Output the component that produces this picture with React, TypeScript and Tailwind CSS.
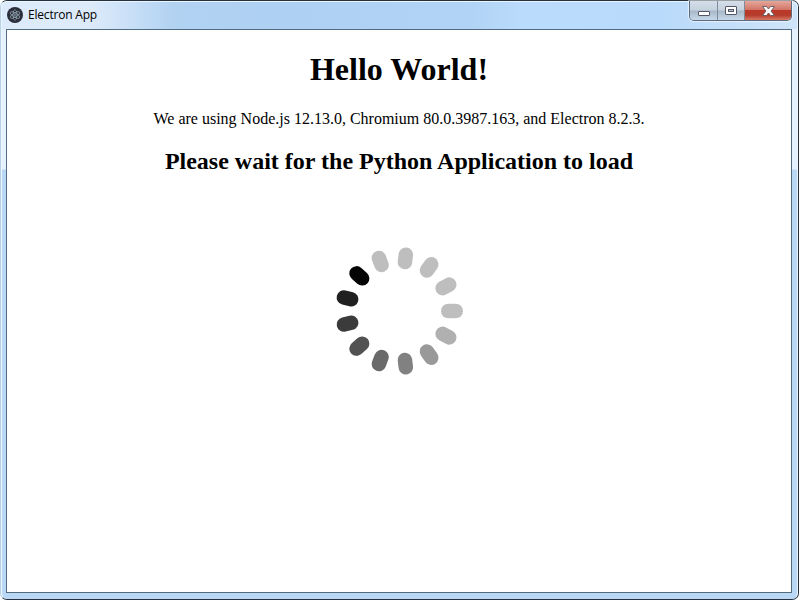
const shades = ["#bebebe", "#b0b0b0", "#999999", "#818181", "#6a6a6a", "#525252", "#3b3b3b", "#202020", "#040404", "#bebebe", "#bebebe", "#bebebe", "#bebebe"];

function ElectronIcon() {
  return (
    <svg className="h-4 w-4" viewBox="0 0 16 16">
      <circle cx="8" cy="8" r="8" fill="#2b2e3a" />
      <g fill="none" stroke="#93a7b3" strokeWidth="0.7">
        <ellipse cx="8" cy="8" rx="5.4" ry="2" transform="rotate(30 8 8)" />
        <ellipse cx="8" cy="8" rx="5.4" ry="2" transform="rotate(90 8 8)" />
        <ellipse cx="8" cy="8" rx="5.4" ry="2" transform="rotate(150 8 8)" />
      </g>
      <circle cx="8" cy="8" r="0.8" fill="#a9bdc8" />
    </svg>
  );
}

function TitleBar() {
  return (
    <header className="flex h-[27px] shrink-0 items-start justify-between pl-[5px] pr-[5px]">
      <div className="flex h-[26px] items-center gap-[5px]">
        <ElectronIcon />
        <span className="font-['Open_Sans','Noto_Sans',sans-serif] text-[12px] leading-4 tracking-[-0.2px] text-black">Electron App</span>
      </div>
      <div className="-mt-px flex h-5 w-[103px] overflow-hidden rounded-b-[5px] border border-t-0 border-[#5c6b7c] shadow-[0_0_1px_1px_rgba(255,255,255,0.6)]">
        <button aria-label="Minimize" className="flex w-7 items-center justify-center border-r border-[#7d8b9b] bg-[linear-gradient(#d5dfea_0%,#c6d1de_48%,#a8b7c8_52%,#c6d8e9_100%)]">
          <svg className="h-[18px] w-[27px]" viewBox="0 0 27 18"><rect x="8.5" y="9.5" width="11" height="4" rx="0.5" fill="#fff" stroke="#535666" /></svg>
        </button>
        <button aria-label="Maximize" className="flex w-[27px] items-center justify-center border-r border-[#7d8b9b] bg-[linear-gradient(#d5dfea_0%,#c6d1de_48%,#a8b7c8_52%,#c6d8e9_100%)]">
          <svg className="h-[18px] w-[26px]" viewBox="0 0 26 18"><rect x="7.5" y="4.5" width="11" height="8" rx="0.5" fill="#fff" stroke="#535666" /><rect x="10.5" y="7.5" width="5" height="2" fill="#b8c4d2" stroke="#535666" /></svg>
        </button>
        <button aria-label="Close" className="flex flex-1 items-center justify-center bg-[linear-gradient(#e5a79b_0%,#d17668_45%,#bb3828_50%,#b53c2b_75%,#d87865_100%)]">
          <svg className="h-[18px] w-[46px]" viewBox="0 0 46 18"><path d="M17.5 4.5h4L23.5 7l2-2.5h4L26 9l3.5 4.5h-4L23.5 11l-2 2.5h-4L21 9Z" fill="#fff" stroke="#62545b" strokeWidth="0.9" /></svg>
        </button>
      </div>
    </header>
  );
}

function Spinner() {
  return (
    <svg className="h-[140px] w-[140px]" viewBox="-70 -70 140 140" role="img" aria-label="Loading">
      {shades.map((shade, i) => (
        <rect key={i} x="42" y="-7.25" width="22" height="14.5" rx="7.25" fill={shade} transform={`rotate(${(i * 360) / 13})`} />
      ))}
    </svg>
  );
}

export default function App() {
  return (
    <div className="h-[601px] w-[800px] overflow-hidden bg-white">
      <div className="flex h-[600px] w-[799px] flex-col rounded-[7px] border border-[#27313d] border-l-[#b9cfe2] bg-[linear-gradient(#e5f2fd_0px,#e5f2fd_168px,#b9d8f5_169px,#b9d8f5_600px)]">
        <div className="flex flex-1 flex-col rounded-[6px] border border-[#eaf6ff] border-b-[#b9d8f5] bg-[linear-gradient(90deg,#dceafa_0px,#dceafa_90px,#c8dff7_130px,#b2d2f2_170px,#aed0f2_270px,#b1d3f5_470px,#badbfb_520px,#b9dafa_660px,#cfe4f8_797px)] bg-[length:100%_27px] bg-no-repeat">
          <TitleBar />
          <main className="mb-[5px] ml-1 mr-[5px] flex flex-1 flex-col items-center border border-[#526b80] bg-white font-['Liberation_Serif',serif] text-black">
            <h1 className="mt-[21px] text-[32px] font-bold leading-[37px]">Hello World!</h1>
            <p className="mt-[22px] text-[16px] leading-[18px]">We are using Node.js 12.13.0, Chromium 80.0.3987.163, and Electron 8.2.3.</p>
            <h2 className="mt-5 text-[24px] font-bold leading-[27px]">Please wait for the Python Application to load</h2>
            <div className="mr-px mt-[66px]"><Spinner /></div>
          </main>
        </div>
      </div>
    </div>
  );
}
